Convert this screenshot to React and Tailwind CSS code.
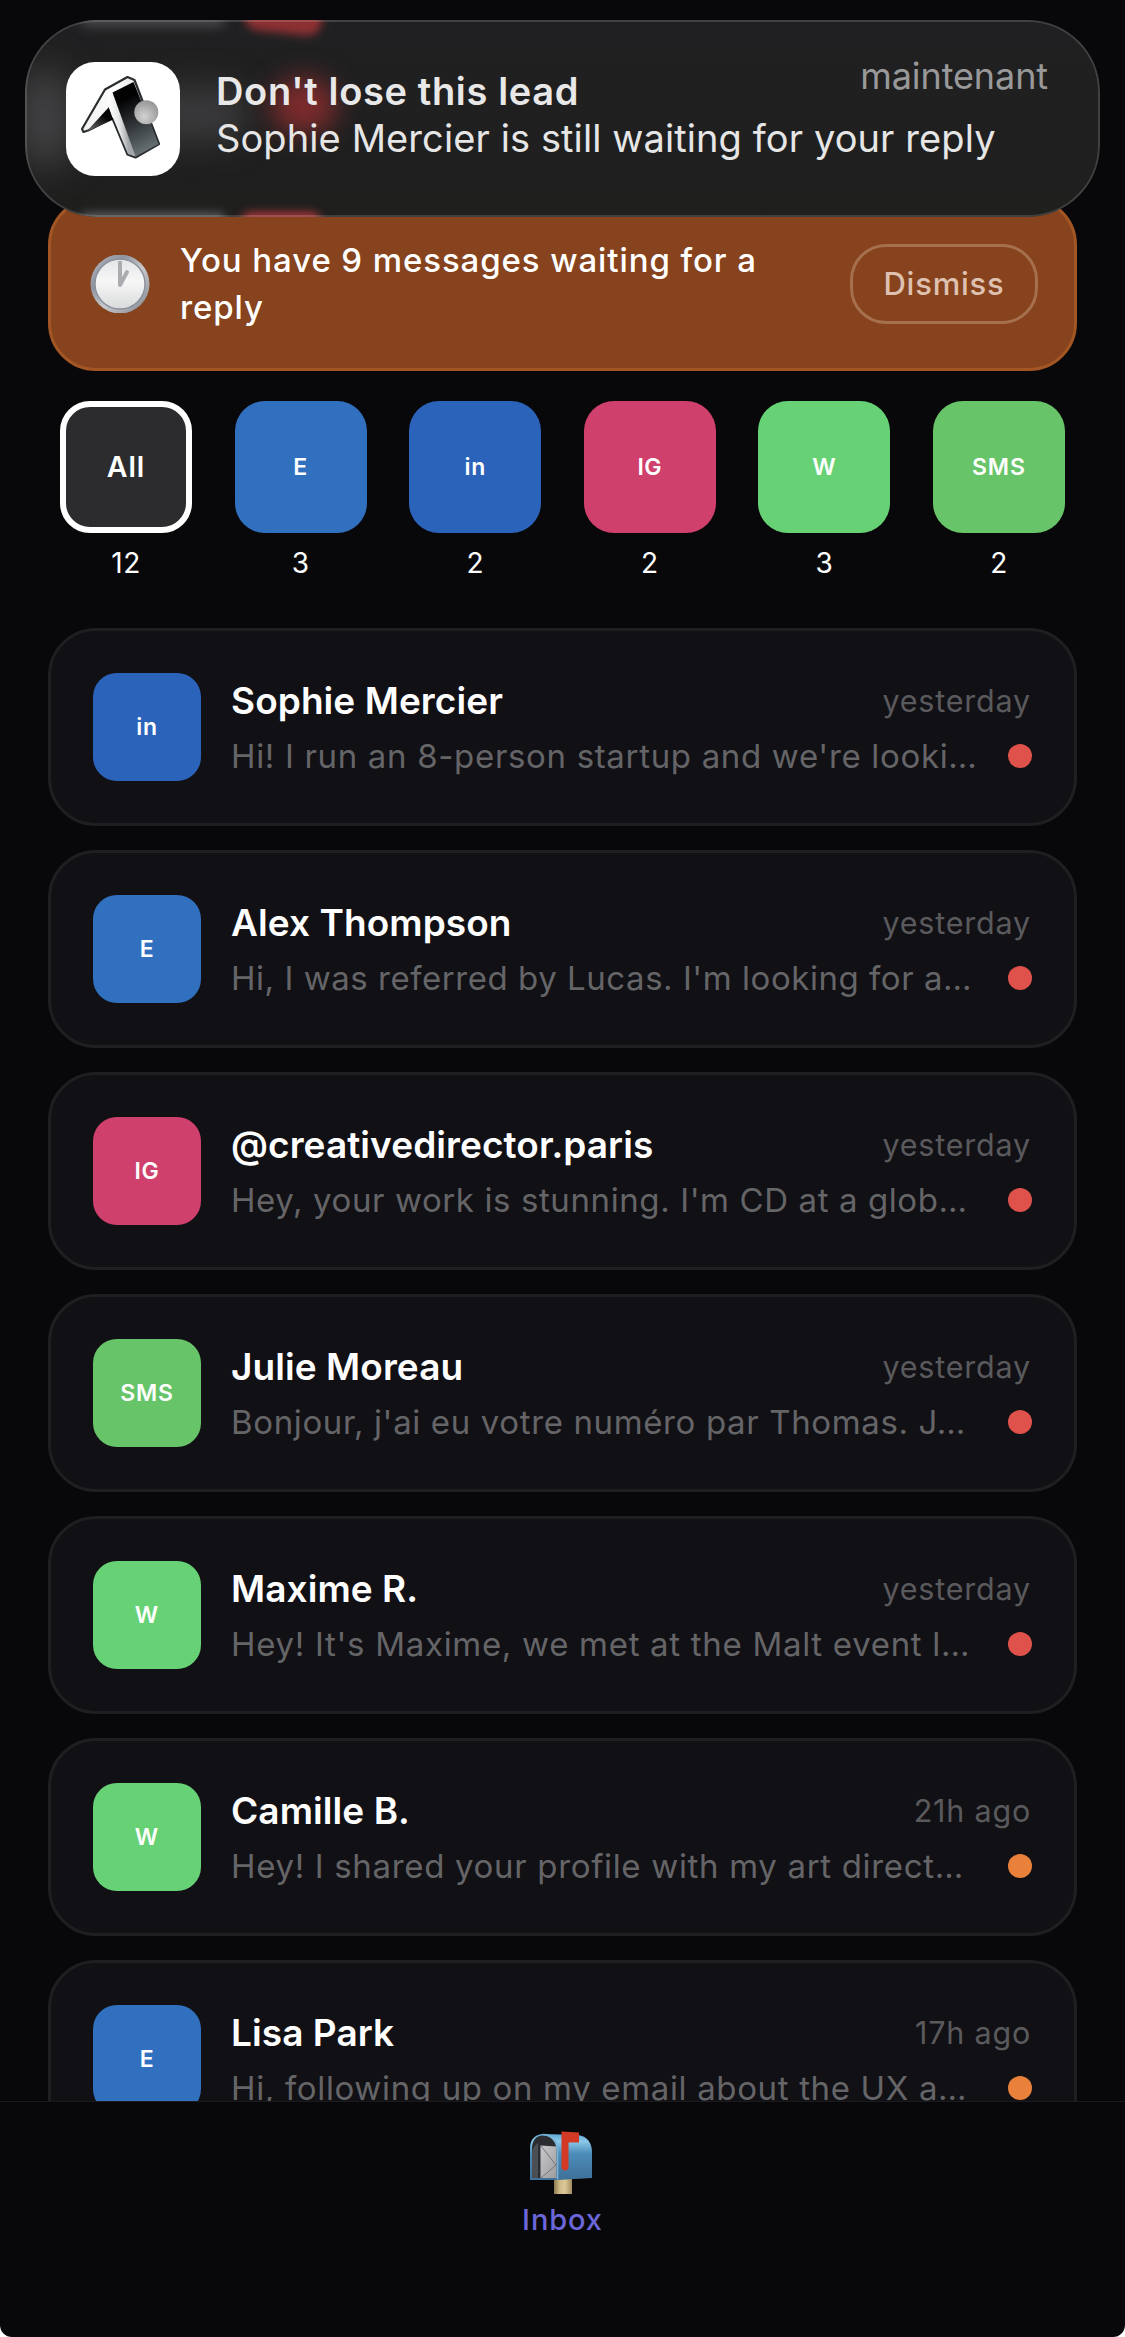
const filters = [
  { label: 'All', count: 12, color: 'border-[6px] border-white bg-[#2c2c2e]', text: 'text-[28.5px] tracking-[1px]' },
  { label: 'E', count: 3, color: 'bg-[#3070be]', text: 'text-[23px] tracking-[0.6px]' },
  { label: 'in', count: 2, color: 'bg-[#2b63ba]', text: 'text-[23px] tracking-[0.6px]' },
  { label: 'IG', count: 2, color: 'bg-[#cf406c]', text: 'text-[23px] tracking-[0.6px]' },
  { label: 'W', count: 3, color: 'bg-[#67d275]', text: 'text-[23px] tracking-[0.6px]' },
  { label: 'SMS', count: 2, color: 'bg-[#67c468]', text: 'text-[23px] tracking-[1px]' },
];

const channelColors = {
  E: 'bg-[#3070be]',
  in: 'bg-[#2b63ba]',
  IG: 'bg-[#cf406c]',
  W: 'bg-[#67d275]',
  SMS: 'bg-[#67c468]',
};

const messages = [
  { channel: 'in', name: 'Sophie Mercier', time: 'yesterday', preview: "Hi! I run an 8-person startup and we're looki…", dot: 'bg-[#df524b]', tracking: 'tracking-[0.67px]' },
  { channel: 'E', name: 'Alex Thompson', time: 'yesterday', preview: "Hi, I was referred by Lucas. I'm looking for a…", dot: 'bg-[#df524b]', tracking: 'tracking-[0.54px]' },
  { channel: 'IG', name: '@creativedirector.paris', time: 'yesterday', preview: "Hey, your work is stunning. I'm CD at a glob…", dot: 'bg-[#df524b]', tracking: 'tracking-[0.6px]' },
  { channel: 'SMS', name: 'Julie Moreau', time: 'yesterday', preview: "Bonjour, j'ai eu votre numéro par Thomas. J…", dot: 'bg-[#df524b]', tracking: 'tracking-[0.63px]' },
  { channel: 'W', name: 'Maxime R.', time: 'yesterday', preview: "Hey! It's Maxime, we met at the Malt event l…", dot: 'bg-[#df524b]', tracking: 'tracking-[0.7px]' },
  { channel: 'W', name: 'Camille B.', time: '21h ago', preview: 'Hey! I shared your profile with my art direct…', dot: 'bg-[#e9813a]', tracking: 'tracking-[0.67px]' },
  { channel: 'E', name: 'Lisa Park', time: '17h ago', preview: 'Hi, following up on my email about the UX a…', dot: 'bg-[#e9813a]', tracking: 'tracking-[0.65px]' },
];

const AppLogo = () => (
  <svg viewBox="0 0 114 114" className="relative size-[114px] shrink-0 rounded-[29px] bg-white">
    <defs>
      <linearGradient id="face" x1="0.3" y1="0" x2="0.6" y2="1">
        <stop offset="0.2" stopColor="#020203" />
        <stop offset="0.6" stopColor="#34393c" />
        <stop offset="1" stopColor="#6b7578" />
      </linearGradient>
      <linearGradient id="roof" x1="1" y1="0" x2="0" y2="1">
        <stop offset="0" stopColor="#d4d5d6" />
        <stop offset="0.35" stopColor="#fdfdfd" />
        <stop offset="0.8" stopColor="#f1f1f2" />
        <stop offset="1" stopColor="#c2c3c5" />
      </linearGradient>
      <linearGradient id="edge" x1="0" y1="0.1" x2="0.6" y2="0">
        <stop offset="0" stopColor="#ffffff" />
        <stop offset="0.55" stopColor="#e6e7e8" />
        <stop offset="1" stopColor="#a3a7aa" />
      </linearGradient>
      <linearGradient id="under" x1="0.8" y1="0" x2="0.2" y2="1">
        <stop offset="0.35" stopColor="#050505" />
        <stop offset="1" stopColor="#666666" />
      </linearGradient>
      <radialGradient id="ball" cx="0.42" cy="0.68" r="0.7">
        <stop offset="0" stopColor="#d2d2d2" />
        <stop offset="1" stopColor="#949494" />
      </radialGradient>
    </defs>
    <path
      d="M16 67 L39 27.5 L61.5 15 L68.5 18 L93 82 L69.5 95.5 L61.5 92.5 L46.5 56.5 L22 68.5 L17.5 70 Z"
      fill="url(#roof)"
      stroke="#2a2e30"
      strokeWidth="2.2"
      strokeLinejoin="round"
    />
    <path d="M43 45 L21 69 L47 57.5 Z" fill="url(#under)" />
    <path d="M42 34 L46.5 31 L70 94.5 L62 92 L43 46 Z" fill="url(#edge)" />
    <path d="M46.5 30.5 L67.5 20 L92.5 82 L69.5 94.5 Z" fill="url(#face)" />
    <circle cx="80.3" cy="50.3" r="12" fill="url(#ball)" />
  </svg>
);

const ClockIcon = () => (
  <svg viewBox="0 0 60 58" className="h-[58px] w-[60px] shrink-0">
    <defs>
      <linearGradient id="rim" x1="0" y1="0" x2="1" y2="1">
        <stop offset="0" stopColor="#b9bcc4" />
        <stop offset="0.3" stopColor="#8e939e" />
        <stop offset="0.55" stopColor="#c9c9cb" />
        <stop offset="1" stopColor="#7d828b" />
      </linearGradient>
      <linearGradient id="dial" x1="0" y1="0" x2="0" y2="1">
        <stop offset="0" stopColor="#e4e5e8" />
        <stop offset="0.45" stopColor="#f7f7f7" />
        <stop offset="1" stopColor="#d9dadb" />
      </linearGradient>
    </defs>
    <circle cx="30" cy="29" r="29.5" fill="url(#rim)" />
    <circle cx="30" cy="29" r="25" fill="url(#dial)" stroke="#8a919c" strokeWidth="1.4" />
    <path d="M30 7.5 V30 L37 17" fill="none" stroke="#abacaf" strokeWidth="4" strokeLinecap="round" strokeLinejoin="round" />
  </svg>
);

const MailboxIcon = () => (
  <svg viewBox="0 0 62 63" className="mr-[3px] h-[63px] w-[62px]">
    <defs>
      <linearGradient id="box" x1="0" y1="0" x2="0" y2="1">
        <stop offset="0" stopColor="#5fa9d3" />
        <stop offset="0.16" stopColor="#8cc8e8" />
        <stop offset="0.42" stopColor="#4c8dba" />
        <stop offset="1" stopColor="#3e7099" />
      </linearGradient>
      <linearGradient id="post" x1="0" y1="0" x2="1" y2="0">
        <stop offset="0" stopColor="#8b7850" />
        <stop offset="0.3" stopColor="#cdb986" />
        <stop offset="0.6" stopColor="#dcc997" />
        <stop offset="1" stopColor="#a28d62" />
      </linearGradient>
      <linearGradient id="letter" x1="0" y1="0" x2="1" y2="1">
        <stop offset="0" stopColor="#c9c9cc" />
        <stop offset="1" stopColor="#9c9c9f" />
      </linearGradient>
    </defs>
    <rect x="24" y="46" width="18" height="17" fill="url(#post)" />
    <path d="M13 3 L48 4 C57 5 62 12 62 21 V47 L28 49 H0 V17 C0 8 6 3 13 3 Z" fill="url(#box)" />
    <path d="M2 47 V17 C2 9 7 4.5 13 4.5 C21 4.5 26.5 11 26.5 19 V47 Z" fill="#2b2d31" />
    <path d="M2 47 V22 C2 18 5 14 8 12 V47 Z" fill="#4b4e52" />
    <path d="M10.5 14.5 L26.5 15.5 V47 H10.5 Z" fill="url(#letter)" />
    <path d="M11 15 L26 34 L11 47" fill="none" stroke="#77777b" strokeWidth="1" />
    <path d="M13 3.5 C22 3.5 27.5 11 27.5 19 V48.5" fill="none" stroke="#78b4d8" strokeWidth="1.6" />
    <path d="M31.5 0.5 L49 1.5 V11.5 H38.5 V36 C38.5 38 37 39.5 35 39.5 C33 39.5 31.5 38 31.5 36 Z" fill="#d23a26" />
  </svg>
);

const Notification = () => (
  <div className="absolute top-5 left-[25px] z-10 flex h-[197px] w-[1075px] overflow-hidden rounded-[72px] bg-gradient-to-b from-[#202022] to-[#1f1f1e] pt-[42px] pl-[41px]">
    {/* light bleeding through the glass */}
    <div className="absolute top-[50px] -left-2 h-24 w-14 rounded-full bg-[#424244] blur-[18px]" />
    <div className="absolute top-[66px] left-28 h-14 w-28 rounded-full bg-[#39393b] blur-[16px]" />
    <div className="absolute -top-[6px] left-14 h-3 w-36 rounded-full bg-[#4e4e50] blur-[6px]" />
    <div className="absolute -bottom-[8px] left-14 h-3 w-36 rounded-full bg-[#606062] blur-[5px]" />
    <div className="absolute top-[58px] left-[246px] h-[56px] w-[66px] rounded-full bg-[#7c2b2c] blur-[13px]" />
    <div className="absolute -top-[16px] left-[219px] h-[29px] w-[78px] rotate-6 rounded-full bg-[#8e3032] blur-[4px]" />
    <div className="absolute -bottom-[15px] left-[216px] h-[20px] w-[80px] rounded-full bg-[#a83638] blur-[4px]" />
    <div className="absolute inset-0 rounded-[72px] border-2 border-white/15" />
    <AppLogo />
    <div className="relative ml-[36px] flex-1 pt-[6px] font-[Inter]">
      <p className="text-[38px] leading-[47px] font-semibold tracking-[0.65px] text-[#e8e8e8]">Don't lose this lead</p>
      <p className="text-[38px] leading-[47px] tracking-[0.1px] text-[#e6e6e6]">Sophie Mercier is still waiting for your reply</p>
    </div>
    <span className="absolute top-[34px] right-[52px] text-[36px] leading-[44px] tracking-[-0.1px] text-[#99999a]">maintenant</span>
  </div>
);

const ReplyBanner = () => (
  <div className="mt-[197px] flex h-[174px] shrink-0 items-center rounded-[48px] border-[3px] border-[#a35624] bg-[#86431d] pr-9 pl-[39px]">
    <ClockIcon />
    <p className="ml-[30px] flex-1 pr-[30px] text-[33px] leading-[47px] font-[450] tracking-[0.9px] text-white">
      You have 9 messages waiting for a reply
    </p>
    <button className="h-20 w-[188px] rounded-[36px] border-[3px] border-[#a66f4d] text-[31px] leading-[40px] font-[450] tracking-[0.8px] text-[#dec1b0]">
      Dismiss
    </button>
  </div>
);

const MessageCard = ({ channel, name, time, preview, dot, tracking }) => (
  <div className="flex h-[198px] shrink-0 items-center gap-[30px] rounded-[48px] border-[3px] border-[#1f1f22] bg-[#111015] px-[42px]">
    <div
      className={`flex size-[108px] shrink-0 items-center justify-center rounded-3xl text-[23px] font-semibold tracking-[0.8px] text-white ${channelColors[channel]}`}
    >
      {channel}
    </div>
    <div className="flex min-w-0 flex-1 flex-col gap-3">
      <div className="flex items-center justify-between">
        <span className="text-[37px] leading-[45px] font-semibold tracking-[0.07px] text-white">{name}</span>
        <span className="mt-0.5 mr-px text-[30.5px] leading-9 tracking-[0.8px] text-[#5a5a5d]">{time}</span>
      </div>
      <div className="flex items-center justify-between">
        <span className={`text-[33px] leading-[42px] whitespace-nowrap text-[#656568] ${tracking}`}>{preview}</span>
        <span className={`size-6 shrink-0 rounded-full ${dot}`} />
      </div>
    </div>
  </div>
);

const App = () => {
  return (
    <div className="relative flex h-[2337px] w-[1125px] flex-col overflow-hidden rounded-b-[12px] bg-[#08080a] font-[Inter]">
      <Notification />
      <main className="flex h-[2101px] flex-col overflow-hidden px-12">
        <ReplyBanner />
        <div className="mt-[30px] flex shrink-0 justify-between px-3">
          {filters.map((f) => (
            <div key={f.label} className="flex flex-col items-center gap-3">
              <div className={`flex size-[132px] items-center justify-center rounded-[30px] font-semibold text-white ${f.color} ${f.text}`}>
                {f.label}
              </div>
              <span className="text-[28px] leading-9 tracking-[0.5px] text-white">{f.count}</span>
            </div>
          ))}
        </div>
        <div className="mt-[47px] flex flex-col gap-6">
          {messages.map((m) => (
            <MessageCard key={m.name} {...m} />
          ))}
        </div>
      </main>
      <nav className="flex flex-1 flex-col items-center border-t border-[#1b1b1e] pt-[29px]">
        <MailboxIcon />
        <span className="mt-2 text-[29px] leading-9 font-[450] tracking-[0.9px] text-[#6b66d9]">Inbox</span>
      </nav>
    </div>
  );
};

export default App;
